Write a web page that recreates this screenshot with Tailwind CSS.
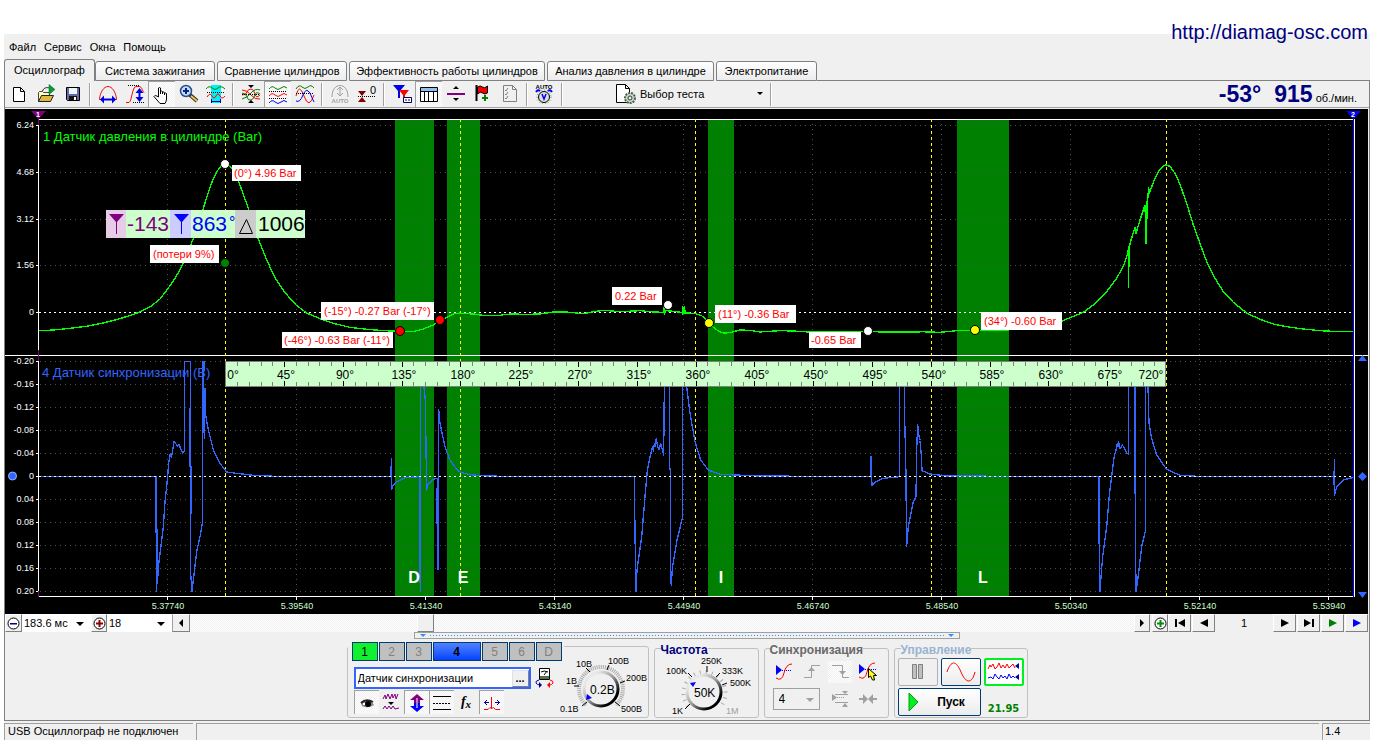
<!DOCTYPE html>
<html lang="ru">
<head>
<meta charset="utf-8">
<title>USB Осциллограф</title>
<script src="https://cdn.jsdelivr.net/npm/@tailwindcss/browser@4"></script>
</head>
<body class="relative bg-white pl-1 pr-3 pt-[34px] font-['Liberation_Sans',sans-serif] text-[11px] leading-[14px] text-black">
<a href="http://diamag-osc.com" class="absolute right-[14px] top-[20px] text-[20px] leading-[24px] text-[#000080]">http://diamag-osc.com</a>
<div class="bg-[#f0f0f0]">

<!-- Menu -->
<nav class="flex h-[25px] items-center gap-2 pl-[5px]">
<button>Файл</button><button>Сервис</button><button>Окна</button><button>Помощь</button>
</nav>

<!-- Tabs -->
<div role="tablist" class="flex h-[22px] items-end gap-[2px]">
<button role="tab" aria-selected="true" class="-mr-[2px] h-[22px] w-[91px] rounded-t-[3px] border border-b-0 border-[#808080] bg-[#f0f0f0] pb-[2px]">Осциллограф</button>
<button role="tab" class="h-[20px] w-[120px] rounded-t-[3px] border border-[#808080] bg-linear-to-b from-white to-[#ececec]">Система зажигания</button>
<button role="tab" class="h-[20px] w-[130px] rounded-t-[3px] border border-[#808080] bg-linear-to-b from-white to-[#ececec]">Сравнение цилиндров</button>
<button role="tab" class="h-[20px] w-[196px] rounded-t-[3px] border border-[#808080] bg-linear-to-b from-white to-[#ececec]">Эффективность работы цилиндров</button>
<button role="tab" class="h-[20px] w-[167px] rounded-t-[3px] border border-[#808080] bg-linear-to-b from-white to-[#ececec]">Анализ давления в цилиндре</button>
<button role="tab" class="h-[20px] w-[101px] rounded-t-[3px] border border-[#808080] bg-linear-to-b from-white to-[#ececec]">Электропитание</button>
<span class="-ml-[2px] h-px flex-1 bg-[#808080]"></span>
</div>

<div class="border-x border-b border-[#808080]">
<!-- Toolbar -->
<div class="flex h-[27px] items-center border-b border-[#a0a0a0]">
<button aria-label="Новый" class="flex h-[26px] w-[27px] items-center justify-center"><svg width="20" height="20"><path d="M4.500 3.500h7l4 4v10h-11zM11.500 3.500v4h4" fill="#fff" stroke="#000"/></svg></button>
<button aria-label="Открыть" class="flex h-[26px] w-[27px] items-center justify-center"><svg width="20" height="20"><path d="M2.500 17.500v-9l1-1h3l1 1h6v3" fill="#ffffb0" stroke="#444"/><path d="M2.500 17.500l3-6h12l-3 6z" fill="#e0b840" stroke="#222"/><path d="M6.500 7c1-3 4-4 7-3" fill="none" stroke="#222"/><path d="M13 .500l6 5-6 5z" fill="#00a030" stroke="#006020" stroke-width=".5"/></svg></button>
<button aria-label="Сохранить" class="flex h-[26px] w-[27px] items-center justify-center"><svg width="20" height="20"><path d="M3.500 3.500h13v13h-12l-1-1z" fill="#6868a8" stroke="#000"/><path d="M6 4h8v6H6z" fill="#e8f8ff"/><path d="M6 12h8v4H6z" fill="#111"/><path d="M11 13h2v3h-2z" fill="#fff"/></svg></button>
<span class="mx-[3px] h-[23px] w-[2px] border-r border-white bg-[#a0a0a0]"></span>
<button aria-label="Ширина" class="flex h-[26px] w-[27px] items-center justify-center"><svg width="20" height="20"><path d="M1.500 15.500C2 8 6 2.500 10 2.500S18 8 18.500 15.500H15M1.500 15.500H5" fill="none" stroke="#f00"/><path d="M2 15.500l4-4v3h8v-3l4 4-4 4v-3H6v3z" fill="#0000e0"/></svg></button>
<button aria-label="Высота" class="flex h-[26px] w-[27px] items-center justify-center"><svg width="20" height="20"><path d="M1 18.500h3C7 17 7 3 11 2.500h3c3 0 3 4 5 6" fill="none" stroke="#f00"/><path d="M3 1.500h11M8 18.500h11" stroke="#000" stroke-dasharray="1 1"/><path d="M14.500 4l4 5h-3v4h3l-4 5-4-5h3V9h-3z" fill="#0000e0"/></svg></button>
<button aria-label="Рука" aria-pressed="true" class="flex h-[26px] w-[27px] items-center justify-center border-l border-t border-[#a0a0a0] bg-[repeating-conic-gradient(#fff_0_25%,#f0f0f0_0_50%)] bg-[length:2px_2px]"><svg width="20" height="20"><path d="M6.500 12V3q1-1 2 0v6V6.500q1-1 2 0V9V7.500q1-1 2 0V10V8.500q1-1 2 0V14q0 2-1.500 4.500h-5Q5 15 2 11.500q1-2 4.500.500z" fill="#fff" stroke="#000"/></svg></button>
<button aria-label="Лупа" class="flex h-[26px] w-[27px] items-center justify-center"><svg width="20" height="20"><path d="M10 10l8 7" stroke="#333" stroke-width="4"/><path d="M12 12l6 5" stroke="#f0c050" stroke-width="2"/><circle cx="7" cy="7" r="5.500" fill="#c0dcff" stroke="#2a5080" stroke-width="1.500"/><path d="M7 4v6M4 7h6" stroke="#102080" stroke-width="2"/></svg></button>
<button aria-label="Фрагмент" class="flex h-[26px] w-[27px] items-center justify-center"><svg width="20" height="20"><path d="M5 1h10v18H5z" fill="#00f0f8"/><path d="M0 5q3-4 6-1t6 0 7 1" fill="none" stroke="#008000"/><path d="M1 8.500h18" stroke="#000" stroke-dasharray="1 1"/><path d="M1 13q3-5 5-1t4 0 4 0 5 0" fill="none" stroke="#f00"/><path d="M5.500 15v4M14.500 15v4M5 17.500h10" stroke="#0000a0"/></svg></button>
<span class="mx-[3px] h-[23px] w-[2px] border-r border-white bg-[#a0a0a0]"></span>
<button aria-label="Совместить" class="flex h-[26px] w-[27px] items-center justify-center"><svg width="20" height="20" fill="none"><path d="M1 11q4 0 5-3t4-3 4 5 5 1" stroke="#f00"/><path d="M1 9q4 0 5 4t4 3 4-5 5-1" stroke="#008000"/><path d="M1 15q5-1 9-6t9-3" stroke="#008000"/><path d="M1 6q5 0 9 5t9 4" stroke="#f00"/><path d="M1 10.500h18" stroke="#000" stroke-dasharray="1 1"/><path d="M7 1h6l-3 3zM7 19h6l-3-3z" fill="#000"/></svg></button>
<button aria-label="Разнести" aria-pressed="true" class="flex h-[26px] w-[27px] items-center justify-center border-l border-t border-[#a0a0a0] bg-[repeating-conic-gradient(#fff_0_25%,#f0f0f0_0_50%)] bg-[length:2px_2px]"><svg width="20" height="20" fill="none"><path d="M1 4q3-4 6-1t6 0 6 0" stroke="#008000"/><path d="M1 11q3-4 6-1t6 0 6 0" stroke="#f00"/><path d="M1 18q3-4 6-1t6 0 6 0" stroke="#0000ff"/><path d="M1 6.500h18M1 13.500h18" stroke="#000" stroke-dasharray="1 1"/></svg></button>
<button aria-label="Наложить" class="flex h-[26px] w-[27px] items-center justify-center"><svg width="20" height="20" fill="none"><path d="M1 5q3-5 6-2t6 0 6 1" stroke="#008000"/><path d="M1 12Q4-2 9 12t10-1" stroke="#f00"/><path d="M1 17q4 2 7-6t7-2q2 5 4 9" stroke="#0000ff"/><path d="M1 9.500h18" stroke="#000" stroke-dasharray="1 1"/></svg></button>
<span class="mx-[3px] h-[23px] w-[2px] border-r border-white bg-[#a0a0a0]"></span>
<button aria-label="Автомасштаб" disabled class="flex h-[26px] w-[27px] items-center justify-center"><svg width="20" height="20"><path d="M2 13C2 5 6 1.500 10 1.500S18 5 18 13M10 3v9M7 6l3-3 3 3M7 9l3 3 3-3" fill="none" stroke="#a0a0a0"/><text x="10" y="19" font-size="6" font-weight="bold" text-anchor="middle" fill="#a0a0a0">AUTO</text></svg></button>
<button aria-label="Обнулить" class="flex h-[26px] w-[27px] items-center justify-center"><svg width="20" height="20"><path d="M1 7h8l-4 5zM1 18h8l-4-5z" fill="#800000"/><path d="M1 12.500h18" stroke="#000" stroke-dasharray="1 1"/><text x="13" y="10" font-size="11">0</text></svg></button>
<span class="mx-[3px] h-[23px] w-[2px] border-r border-white bg-[#a0a0a0]"></span>
<button aria-label="Курсоры" class="flex h-[26px] w-[27px] items-center justify-center"><svg width="20" height="20"><path d="M1 1h12L8 7v7H6V7z" fill="#0000f0"/><path d="M7 6h10l-4 5v7h-2v-7z" fill="#f00"/><path d="M11.500 13.500h8v5h-8z" fill="#fff" stroke="#000060"/><path d="M13 16h2m1 0h2" stroke="#000060"/></svg></button>
<button aria-label="Таблица" aria-pressed="true" class="flex h-[26px] w-[27px] items-center justify-center border-l border-t border-[#a0a0a0] bg-[repeating-conic-gradient(#fff_0_25%,#f0f0f0_0_50%)] bg-[length:2px_2px]"><svg width="20" height="20"><path d="M1.500 2.500h17v14h-17z" fill="#fff" stroke="#000"/><path d="M2 3h16v3H2z" fill="#90c0f0"/><path d="M2 6.500h16M5.500 6v10M9.500 6v10M14.500 6v10" stroke="#000"/></svg></button>
<button aria-label="Уровень" class="flex h-[26px] w-[27px] items-center justify-center"><svg width="20" height="20"><path d="M7 5l3-3 3 3zM7 14l3 3 3-3z"/><path d="M1 9h18v2H1z" fill="#800080"/></svg></button>
<button aria-label="Метка" class="flex h-[26px] w-[27px] items-center justify-center"><svg width="20" height="20"><path d="M3.500 1v16" stroke="#000" stroke-width="2"/><path d="M4.500 3q3-2 5 0t5-1v7q-3 2-5 0t-5 1z" fill="#f00000" stroke="#000"/><path d="M12 11v6M9 14h6" stroke="#008000" stroke-width="2"/></svg></button>
<button aria-label="Отчёт" disabled class="flex h-[26px] w-[27px] items-center justify-center"><svg width="20" height="20"><path d="M3.500 1.500h9l4 4v12h-13zM12.500 1.500v4h4" fill="none" stroke="#808080"/><path d="M5 6l1 1 2-3M5 10l1 1 2-3M5 14l1 1 2-3" fill="none" stroke="#808080"/></svg></button>
<span class="mx-[3px] h-[23px] w-[2px] border-r border-white bg-[#a0a0a0]"></span>
<button aria-label="Авто диапазон" class="flex h-[26px] w-[27px] items-center justify-center"><svg width="20" height="20"><text x="9" y="5" font-size="6" font-weight="bold" text-anchor="middle">AUTO</text><circle cx="9" cy="13" r="5.500" fill="#ddd" stroke="#000"/><circle cx="9" cy="13" r="7" fill="none" stroke="#777" stroke-dasharray="1 2"/><path d="M7 10l2 5 2-5" fill="none" stroke="#00f" stroke-width="1.500"/><path d="M1 8q2-3 4-1M17 8q-2-3-4-1" fill="none" stroke="#00f" stroke-width="2"/></svg></button>
<span class="mx-[3px] h-[23px] w-[2px] border-r border-white bg-[#a0a0a0]"></span>
<button class="ml-[50px] flex h-[26px] w-[148px] items-center gap-1"><svg width="20" height="20"><path d="M.500.500h9l4 4v14H.500zM9.500.500v4h4" fill="#fff" stroke="#000"/><circle cx="14" cy="14" r="5" fill="#c8d8c8" stroke="#506050" stroke-width="2" stroke-dasharray="2 1"/><circle cx="14" cy="14" r="2" fill="#eee" stroke="#304030"/></svg><span class="flex-1 text-left">Выбор теста</span><svg width="7" height="4"><path d="M0 0h6L3 3z"/></svg></button>
<span class="ml-[6px] h-[23px] w-[2px] border-r border-white bg-[#a0a0a0]"></span>
<output class="ml-auto mr-[12px] flex items-baseline font-bold text-[#000080]"><span class="mr-[13px] text-[23px] leading-[24px]">-53°</span><span class="mr-[3px] text-[23px] leading-[24px]">915</span><span class="text-[11px] font-normal text-black">об./мин.</span></output>
</div>

<!-- Waveform chart -->
<div class="pr-px pt-px">
<svg viewBox="5 109 1363 505" class="block h-auto w-full bg-black" role="img" aria-label="Осциллограмма">
<g fill="#008000"><path d="M395 120h39v235h-39zM395 356h39v240h-39zM447 120h33v235h-33zM447 356h33v240h-33zM708 120h26v235h-26zM708 356h26v240h-26zM957 120h52v235h-52zM957 356h52v240h-52z"/></g>
<g stroke="#505050" stroke-dasharray="1 4" shape-rendering="crispEdges">
<path d="M40 125.500H1352M40 172.500H1352M40 219.500H1352M40 265.500H1352M40 361.500H1352M40 384.500H1352M40 407.500H1352M40 430.500H1352M40 453.500H1352M40 499.500H1352M40 522.500H1352M40 545.500H1352M40 568.500H1352M40 591.500H1352"/>
<path d="M167.500 124V596M296.500 124V596M425.500 124V596M554.500 124V596M683.500 124V596M812.500 124V596M941.500 124V596M1070.500 124V596M1199.500 124V596M1328.500 124V596"/>
</g>
<g stroke="#fff" shape-rendering="crispEdges" fill="none">
<path d="M38 119.500H1354M5 355.500H1368M38.500 119V597M38 596.500H1354M1354.500 119V597"/>
<path d="M36 125.500h2M36 172.500h2M36 219.500h2M36 265.500h2M36 312.500h2M36 361.500h2M36 384.500h2M36 407.500h2M36 430.500h2M36 453.500h2M36 476.500h2M36 499.500h2M36 522.500h2M36 545.500h2M36 568.500h2M36 591.500h2M167.500 597v3M296.500 597v3M425.500 597v3M554.500 597v3M683.500 597v3M812.500 597v3M941.500 597v3M1070.500 597v3M1199.500 597v3M1328.500 597v3"/>
<path d="M39 312.500H1353" stroke-dasharray="2 3"/>
<path d="M1353.500 119V597" stroke="#00f"/>
<path d="M38.500 115v10M38.500 350v11M38.500 591v6" stroke="#800080"/>
</g>
<g stroke="#ff0" stroke-dasharray="3 3" shape-rendering="crispEdges"><path d="M225.500 119V596M460.500 119V596M695.500 119V596M931.500 119V596M1166.500 119V596"/></g>

<!-- Channel titles -->
<text x="43" y="141" font-size="13" fill="#00ff00">1 Датчик давления в цилиндре (Bar)</text>
<text x="42" y="377" font-size="13" fill="#3366ff">4 Датчик синхронизации (В)</text>

<!-- Cylinder pressure trace -->
<g fill="none" stroke="#00ff00" stroke-width="4" shape-rendering="crispEdges" stroke-linejoin="round">
<path transform="translate(0 105) scale(.333333)" d="M118 677L160 675 200 671 260 664 300 656 350 644 385 633 420 621 450 606 480 582 502 553 520 528 540 495 550 472 568 430 580 400 610 310 625 262 640 220 652 198 665 180 676 176 688 183 700 195 718 235 745 310 775 402 800 465 825 518 855 563 888 600 920 624 960 641 1000 655 1050 667 1110 674 1170 678 1200 679 1240 680 1270 672 1300 660 1320 645 1340 638 1360 627 1380 624"/>
<path transform="translate(460 280) scale(.333333)" d="M0 100L40 102 75 107 110 107 150 102 200 103 240 102 280 96 320 96 370 101 400 95 430 91 480 95 540 92 580 96 610 97 612 84 614 103 616 92 630 93 665 97 668 103 668 80 672 100 673 80 676 99 705 100 725 107 747 128 760 142 775 153 790 159 810 158 840 150 870 151 900 156 960 152 1000 153 1044 156 1100 156 1224 155 1280 156 1380 156"/>
<path transform="translate(920 105) scale(.333333)" d="M0 680L60 682 110 677 165 676 250 677 330 665 380 655 426 648 490 622 520 600 560 560 590 520 610 483 622 450 626 425 625 548 628 430 630 415 645 367 648 385 660 345 675 300 678 415 679 290 681 340 683 285 686 247 688 265 700 232 715 200 728 185 738 180 750 184 765 205 780 238 800 295 820 360 838 410 860 470 885 520 910 560 940 592 980 624 1020 643 1060 657 1100 665 1150 672 1200 677 1240 679 1300 680"/>
</g>
<!-- Sync sensor trace -->
<g fill="none" stroke="#3366ff" stroke-width="4" shape-rendering="crispEdges" stroke-linejoin="round">
<path transform="translate(0 350) scale(.333333)" d="M118 380H467L467 548 469 380 470 725 472 540 473 700 474 660 480 610 490 530 495 455 502 390 506 340 510 312 514 322 518 300 522 275 527 280 532 290 537 282 542 297 548 310 553 303 553 35 571 35 570 350 573 350 572 670 576 725 580 690 590 605 600 560 607 520 608 35 612 35 610 150 613 265 615 115 617 195 625 240 640 300 660 340 680 366 710 370 760 376 850 380 1173 380 1174 325 1175 418 1177 410 1190 395 1215 383 1258 380 1258 548 1261 725 1261 110 1272 110 1276 150 1278 290 1280 420 1284 403 1300 388 1312 385 1310 520 1313 385 1314 660 1316 178 1319 215 1335 290 1350 330 1370 358 1380 366"/>
<path transform="translate(460 280) scale(.333333)" d="M0 576L30 584 80 588 200 590 523 590 525 760 528 935 531 870 545 770 555 650 562 570 570 530 574 515 578 500 580 514 583 490 585 500 589 475 593 500 597 508 602 492 606 505 611 525 613 320 613 245 629 245 629 560 632 580 631 885 634 915 637 865 650 785 667 715 667 245 676 245 680 320 690 400 705 485 722 540 745 570 780 583 900 588 1232 590 1233 530 1236 618 1245 607 1270 595 1318 590 1318 245 1332 245 1334 420 1337 520 1340 800 1345 740 1360 665 1368 650 1370 510 1373 433 1377 470 1380 480"/>
<path transform="translate(920 350) scale(.333333)" d="M0 272L4 315 6 362 30 372 80 378 537 380 537 550 540 725 543 680 548 620 560 530 568 435 576 370 582 322 588 300 592 280 594 290 596 275 600 297 607 285 614 295 620 310 626 312 626 110 645 110 645 370 648 725 652 700 665 590 677 540 677 110 684 110 687 220 695 265 710 315 740 358 780 376 850 380 1243 380 1242 405 1243 330 1244 435 1250 410 1270 390 1300 382"/>
</g>
<path d="M39 476.500H1353" stroke="#fff" stroke-dasharray="2 3" shape-rendering="crispEdges"/>

<!-- Crank angle ruler -->
<g shape-rendering="crispEdges">
<path d="M225.500 361.500h940v25h-940z" fill="#ccffcc" stroke="#808080"/>
<path d="M237 364H1165M237 384H1165" stroke="#808080" stroke-width="4" stroke-dasharray="1 10.760"/>
<path d="M284 364.500H1160M284 383.500H1160" stroke="#000" stroke-width="5" stroke-dasharray="1 57.800"/>
</g>
<g font-size="12" text-anchor="middle">
<text x="233" y="379">0°</text><text x="286" y="379">45°</text><text x="345" y="379">90°</text><text x="404" y="379">135°</text><text x="463" y="379">180°</text><text x="521" y="379">225°</text><text x="580" y="379">270°</text><text x="639" y="379">315°</text><text x="698" y="379">360°</text><text x="757" y="379">405°</text><text x="816" y="379">450°</text><text x="875" y="379">495°</text><text x="934" y="379">540°</text><text x="992" y="379">585°</text><text x="1051" y="379">630°</text><text x="1110" y="379">675°</text><text x="1151" y="379">720°</text>
</g>
<g font-size="16" font-weight="bold" fill="#fff" text-anchor="middle"><text x="414" y="583">D</text><text x="463" y="583">E</text><text x="721" y="583">I</text><text x="983" y="583">L</text></g>

<!-- Axis labels -->
<g font-size="9" fill="#fff" text-anchor="end">
<text x="34" y="128">6.24</text><text x="34" y="175">4.68</text><text x="34" y="222">3.12</text><text x="34" y="268">1.56</text><text x="34" y="315">0</text>
<text x="34" y="364">-0.20</text><text x="34" y="387">-0.16</text><text x="34" y="410">-0.12</text><text x="34" y="433">-0.08</text><text x="34" y="456">-0.04</text><text x="34" y="479">0</text><text x="34" y="502">0.04</text><text x="34" y="525">0.08</text><text x="34" y="548">0.12</text><text x="34" y="571">0.16</text><text x="34" y="594">0.20</text>
</g>
<g font-size="9" fill="#ccffcc" text-anchor="middle">
<text x="168" y="609">5.37740</text><text x="297" y="609">5.39540</text><text x="426" y="609">5.41340</text><text x="555" y="609">5.43140</text><text x="684" y="609">5.44940</text><text x="813" y="609">5.46740</text><text x="942" y="609">5.48540</text><text x="1071" y="609">5.50340</text><text x="1200" y="609">5.52140</text><text x="1329" y="609">5.53940</text>
</g>

<!-- Value tags -->
<path fill="#fff" d="M232 165h69v16h-69zM150 245h69v18h-69zM321 302h113v18h-113zM282 332h111v16h-111zM612 287h50v18h-50zM715 305h81v18h-81zM809 332h52v16h-52zM981 312h81v18h-81z"/>
<g font-size="11" fill="#f00">
<text x="234" y="177">(0°) 4.96 Bar</text><text x="153" y="258">(потери 9%)</text><text x="324" y="315">(-15°) -0.27 Bar (-17°)</text><text x="284" y="344">(-46°) -0.63 Bar (-11°)</text><text x="615" y="300">0.22 Bar</text><text x="718" y="318">(11°) -0.36 Bar</text><text x="811" y="344">-0.65 Bar</text><text x="984" y="325">(34°) -0.60 Bar</text>
</g>
<g stroke="#000"><g fill="#fff"><circle cx="225" cy="164" r="4.500"/><circle cx="668" cy="305" r="4.500"/><circle cx="868" cy="331" r="4.500"/></g><circle cx="225" cy="263" r="4.500" fill="#008000"/><g fill="#f00"><circle cx="400" cy="331" r="4.500"/><circle cx="440" cy="320" r="4.500"/></g><g fill="#ff0"><circle cx="709" cy="323" r="4.500"/><circle cx="975" cy="330" r="4.500"/></g></g>

<!-- Cursor readout -->
<path d="M106 210h199v28H106z" fill="#ccffcc"/>
<path d="M106 210h20v28h-20z" fill="#e6cce6"/><path d="M170 210h21v28h-21z" fill="#ccccff"/><path d="M235 210h21v28h-21z" fill="#cccccc"/>
<path d="M109 214h15l-7 8v12h-1v-12z" fill="#800080"/><path d="M174 214h15l-7 8v12h-1v-12z" fill="#0000ff"/><path d="M239.500 233.500l7-14 6 14z" fill="none" stroke="#000"/>
<g font-size="21"><text x="127" y="231" fill="#800080">-143</text><text x="192" y="231" fill="#0000ff">863</text><text x="229" y="228" font-size="16" fill="#0000ff">°</text><text x="258" y="231">1006</text></g>

<!-- Cursor flags and channel markers -->
<path d="M31 111h15l-7.500 8z" fill="#800080"/><path d="M1346 111h15l-7.500 8z" fill="#00f"/>
<g font-size="7" font-weight="bold" fill="#fff" text-anchor="middle"><text x="38" y="117">1</text><text x="1353" y="117">2</text></g>
<circle cx="12.500" cy="476" r="4" fill="#3366ff" stroke="#99b3ff"/>
<path d="M1358 361l4.500-6 4.500 6zM1362.500 472l4.500 4.500-4.500 4.500-4.500-4.500zM1358 592h9l-4.500 6z" fill="#3366ff"/>
</svg>
</div>

<!-- Time base and navigation -->
<div class="flex h-[18px] items-stretch pr-px">
<button aria-label="Уменьшить" class="flex w-[17px] items-center justify-center border border-[#808080] border-l-white border-t-white"><svg width="13" height="13"><circle cx="6.500" cy="6.500" r="5.500" fill="#fff" stroke="#000"/><path d="M3 6h7v1.500H3z" fill="#000080"/></svg></button>
<label class="relative flex w-[69px] items-center bg-white"><select aria-label="Развёртка" class="w-full appearance-none bg-transparent pl-[2px] outline-none"><option>183.6 мс</option></select><svg width="8" height="4" class="absolute right-[7px] top-[8px]"><path d="M0 0h8L4 4z"/></svg></label>
<button aria-label="Увеличить" class="flex w-[16px] items-center justify-center border border-[#808080] border-l-white border-t-white"><svg width="13" height="13"><circle cx="6.500" cy="6.500" r="5.500" fill="#fff" stroke="#000"/><path d="M3 5.500h7v2H3zM5.500 3h2v7h-2z" fill="#900000"/></svg></button>
<label class="relative flex w-[65px] items-center bg-white"><select aria-label="Масштаб" class="w-full appearance-none bg-transparent pl-[2px] outline-none"><option>18</option></select><svg width="8" height="4" class="absolute right-[7px] top-[8px]"><path d="M0 0h8L4 4z"/></svg></label>
<button aria-label="Влево" class="flex w-[18px] items-center justify-center border border-[#808080] border-l-[#a0a0a0] border-t-white"><svg width="5" height="8"><path d="M4 0v8L0 4z"/></svg></button>
<div class="flex flex-1 bg-[repeating-conic-gradient(#fff_0_25%,#f0f0f0_0_50%)] bg-[length:2px_2px]"><span class="w-[24%]"></span><button aria-label="Ползунок" class="w-[17px] border border-b-[#808080] border-l-white border-r-[#808080] border-t-white bg-[#f0f0f0]"></button></div>
<button aria-label="Вправо" class="flex w-[16px] items-center justify-center border border-[#808080] border-l-white border-t-white"><svg width="5" height="8"><path d="M0 0v8l4-4z"/></svg></button>
<button aria-label="Добавить" class="ml-[2px] flex w-[16px] items-center justify-center border border-[#808080] border-l-white border-t-white"><svg width="13" height="13"><circle cx="6.500" cy="6.500" r="5.500" fill="#fff" stroke="#000"/><path d="M3 5.500h7v2H3zM5.500 3h2v7h-2z" fill="#009000"/></svg></button>
<button aria-label="В начало" class="flex w-[23px] items-center justify-center border border-[#808080] border-l-white border-t-white"><svg width="10" height="8"><path d="M0 0h2v8H0zM10 0v8L3 4z"/></svg></button>
<button aria-label="Назад" class="ml-px flex w-[23px] items-center justify-center border border-[#808080] border-l-white border-t-white"><svg width="8" height="8"><path d="M8 0v8L0 4z"/></svg></button>
<span class="flex w-[58px] items-center justify-center">1</span>
<button aria-label="Вперёд" class="flex w-[23px] items-center justify-center border border-[#808080] border-l-white border-t-white"><svg width="8" height="8"><path d="M0 0v8l8-4z"/></svg></button>
<button aria-label="В конец" class="ml-px flex w-[23px] items-center justify-center border border-[#808080] border-l-white border-t-white"><svg width="10" height="8"><path d="M8 0h2v8H8zM0 0v8l7-4z"/></svg></button>
<button aria-label="Воспроизвести" class="ml-px flex w-[23px] items-center justify-center border border-[#808080] border-l-white border-t-white"><svg width="8" height="8"><path d="M0 0v8l8-4z" fill="#008000"/></svg></button>
<button aria-label="Воспроизвести всё" class="ml-px flex w-[23px] items-center justify-center border border-[#808080] border-l-white border-t-white"><svg width="8" height="8"><path d="M0 0v8l8-4z" fill="#00f"/></svg></button>
</div>

<!-- Splitter -->
<div class="mx-auto flex h-[7px] w-[546px] items-center gap-1 border border-[#a0a0a0] px-[5px]">
<svg width="6" height="3"><path d="M0 0h6L3 3z" fill="#3090ff"/></svg><span class="h-px flex-1 bg-[repeating-linear-gradient(90deg,#3090ff_0_1px,transparent_1px_3px)]"></span><svg width="6" height="3"><path d="M0 0h6L3 3z" fill="#3090ff"/></svg>
</div>

<!-- Control groups -->
<div class="flex h-[81px] items-end justify-center gap-[5px] pb-[2px]">

<section aria-label="Каналы" class="flex h-[72px] w-[302px] rounded-[3px] border border-[#c0c0c0]">
<div class="-mt-[5px] w-[216px]">
<div class="flex h-[19px] gap-px bg-[#f0f0f0] pl-[4px] text-[12px] text-[#808080]">
<button class="w-[26px] border border-[#003c74] bg-[#10f030] text-black">1</button><button class="w-[26px] border border-[#003c74] bg-[#c0c0c0]">2</button><button class="w-[26px] border border-[#003c74] bg-[#c0c0c0]">3</button><button class="w-[48px] border border-[#003c74] bg-linear-to-b from-[#5080ff] to-[#0040ff] font-bold text-black">4</button><button class="w-[26px] border border-[#003c74] bg-[#c0c0c0]">5</button><button class="w-[26px] border border-[#003c74] bg-[#c0c0c0]">6</button><button class="w-[26px] border border-[#003c74] bg-[#c0c0c0]">D</button>
</div>
<div class="mt-[6px] flex items-center gap-1 pl-[6px]">
<div class="flex h-[22px] w-[177px] items-center border-2 border-[#3366ff] bg-white pl-[2px]"><input aria-label="Датчик канала" value="Датчик синхронизации" class="min-w-0 flex-1 outline-none"><button class="flex h-[17px] w-[17px] items-center justify-center border border-[#808080] border-l-[#e0e0e0] border-t-[#e0e0e0] bg-[#f0f0f0] font-bold">...</button></div>
<button aria-label="Прибор"><svg width="20" height="20"><path d="M4.500.500h10v11h-10z" fill="#fff" stroke="#000"/><path d="M5 8h9v3H5z" fill="#507050"/><path d="M6 4q3-2 7 0M9 7l3-4" fill="none" stroke="#000"/><path d="M4 12q-4 1-3 3t4 2" fill="none" stroke="#0000a0"/><path d="M4 14l3 3-3 3z" fill="#0000a0"/><path d="M15 12q4 1 3 3t-4 2" fill="none" stroke="#f00"/><path d="M15 14l-3 3 3 3z" fill="#f00"/></svg></button>
</div>
<div class="mt-px flex pl-[6px]">
<button aria-label="Показать" class="flex h-[24px] w-[25px] items-center justify-center border-l border-t border-[#a0a0a0] bg-[repeating-conic-gradient(#fff_0_25%,#f0f0f0_0_50%)] bg-[length:2px_2px]"><svg width="16" height="14"><path d="M2 7q5-5 11-1l2 3q-6 4-12 1z" fill="#888"/><path d="M2 7q5-5 12-1" fill="none" stroke="#222" stroke-width="2"/><circle cx="9" cy="8" r="3" fill="#000"/><path d="M4 8h2" stroke="#fff" stroke-width="2"/></svg></button>
<button aria-label="Фильтр" class="flex h-[24px] w-[25px] items-center justify-center"><svg width="18" height="18"><path d="M1 6l2-4 1 4 2-5 2 5 2-5 1 4 2-4 1 5 2-5" fill="none" stroke="#800080"/><path d="M6 9h6l-3 3z"/><path d="M1 16l2-3 2 3 2-3 2 3 2-3 2 3 4-1" fill="none" stroke="#800080"/></svg></button>
<button aria-label="Сдвиг" class="flex h-[24px] w-[25px] items-center justify-center border-l border-t border-[#a0a0a0] bg-[repeating-conic-gradient(#fff_0_25%,#f0f0f0_0_50%)] bg-[length:2px_2px]"><svg width="18" height="20"><path d="M9 1l7 6h-4v3H6V7H2z" fill="#800080"/><path d="M9 19l7-6h-4v-3H6v3H2z" fill="#00f"/><path d="M9 5v10" stroke="#fff"/></svg></button>
<button aria-label="Линии" class="flex h-[24px] w-[25px] items-center justify-center border-l border-t border-[#a0a0a0] bg-[repeating-conic-gradient(#fff_0_25%,#f0f0f0_0_50%)] bg-[length:2px_2px]"><svg width="18" height="16"><path d="M0 1.500h18M0 14.500h18" stroke="#000"/><path d="M0 8.500h18" stroke="#000" stroke-dasharray="2 1"/></svg></button>
<button aria-label="Функция" class="flex h-[24px] w-[25px] items-center justify-center font-['Liberation_Serif',serif] text-[14px] font-bold italic"><span>f</span><span class="pt-1 text-[11px]">x</span></button>
<button aria-label="Импульс" class="flex h-[24px] w-[25px] items-center justify-center border-l border-t border-[#a0a0a0] bg-[repeating-conic-gradient(#fff_0_25%,#f0f0f0_0_50%)] bg-[length:2px_2px]"><svg width="18" height="16"><path d="M1 14.500h4l2-2 1.500 1V2v11.500l2-1 2 2h4.500" fill="none" stroke="#f00"/><path d="M1 7.500h5M4 5L1.500 7.500 4 10M17 7.500h-5M14 5l2.500 2.500L14 10" fill="none" stroke="#0000a0"/></svg></button>
</div>
</div>
<svg width="84" height="68" viewBox="564 649 84 68" class="overflow-visible" role="img" aria-label="Диапазон напряжения">
<defs><linearGradient id="knob" x1="0" y1="0" x2="1" y2="1"><stop offset=".2" stop-color="#e8e8e8"/><stop offset=".5" stop-color="#999"/><stop offset=".8" stop-color="#000"/></linearGradient></defs>
<path d="M586 707a22 22 0 1 1 30 0" fill="none" stroke="#aaa" stroke-width="4" stroke-dasharray="1 1"/>
<path d="M587 704l-5 4M579 688h-5M590 674l-4-4M607 672l2-5M620 685l5-2M615 704l5 4" stroke="#000"/>
<circle cx="601" cy="691" r="17" fill="#f0f0f0" stroke="url(#knob)" stroke-width="3"/><path d="M586 702l1-6 5 4z" fill="#00f"/>
<g font-size="9"><text x="590" y="696" font-size="12">0.2В</text><text x="576" y="669">10В</text><text x="608" y="666">100В</text><text x="566" y="686">1В</text><text x="626" y="683">200В</text><text x="560" y="714">0.1В</text><text x="621" y="714">500В</text></g></svg>
</section>

<fieldset class="h-[79px] w-[105px] rounded-[3px] border border-[#c0c0c0]">
<legend class="ml-[6px] pt-[4px] text-[12px] font-bold leading-[14px] text-[#000080]">Частота</legend>
<svg width="103" height="58" viewBox="655 657 103 58" class="overflow-visible" role="img" aria-label="Частота дискретизации">
<path d="M688 706a21 21 0 1 1 33 0" fill="none" stroke="#aaa" stroke-width="4" stroke-dasharray="1 5"/>
<path d="M690 704l-5 5M692 677l-4-4M707 672v-6M716 677l4-4M722 685l5-2" stroke="#000"/>
<circle cx="704" cy="692" r="17" fill="#f0f0f0" stroke="url(#knob)" stroke-width="3"/><path d="M690 683l6-1-3 5z" fill="#00f"/>
<g font-size="9"><text x="694" y="697" font-size="12">50K</text><text x="701" y="664">250K</text><text x="666" y="674">100K</text><text x="722" y="674">333K</text><text x="730" y="686">500K</text><text x="672" y="714">1K</text><text x="726" y="714" fill="#a0a0a0">1M</text></g></svg>
</fieldset>

<fieldset class="h-[79px] w-[125px] rounded-[3px] border border-[#c0c0c0]">
<legend class="ml-[5px] pt-[4px] text-[12px] font-bold leading-[14px] text-[#696969]">Синхронизация</legend>
<div class="grid grid-cols-4 items-center justify-items-center gap-y-[4px] px-[5px] pt-[3px]">
<button aria-label="Авто" class="h-[24px]"><svg width="18" height="18"><path d="M1 2v10l6-5z" fill="#00f"/><path d="M7 7.500h10" stroke="#00f" stroke-dasharray="1 1"/><path d="M1 15q6 4 8-5t8-9" fill="none" stroke="#f00"/></svg></button>
<button aria-label="Фронт" disabled class="h-[24px]"><svg width="18" height="18"><path d="M1 14.500h7.500v-12h8.500" fill="none" stroke="#a0a0a0"/><path d="M5 8l3.500-4L12 8z" fill="#a0a0a0"/></svg></button>
<button aria-label="Спад" disabled class="flex h-[22px] w-[24px] items-center justify-center bg-[repeating-conic-gradient(#fff_0_25%,#f0f0f0_0_50%)] bg-[length:2px_2px]"><svg width="18" height="18"><path d="M1 2.500h10.500v12H18" fill="none" stroke="#a0a0a0"/><path d="M8 8l3.500 4L15 8z" fill="#a0a0a0"/></svg></button>
<button aria-label="Уровень курсором" class="h-[24px]"><svg width="20" height="20"><path d="M1 2v10l6-5z" fill="#00f"/><path d="M7 7.500h11" stroke="#00f" stroke-dasharray="1 1"/><path d="M1 15q6 4 8-5t8-9" fill="none" stroke="#f00"/><path d="M10.500 6.500v9l2-1.500 2 4h2l-1-4.500h3z" fill="#ff0" stroke="#000"/></svg></button>
<label class="relative col-span-2 w-full pl-[3px]"><select aria-label="Канал синхронизации" class="h-[22px] w-[47px] appearance-none border border-[#a0a0a0] bg-[#f0f0f0] pl-[5px] text-[12px]"><option>4</option></select><svg width="8" height="5" class="absolute left-[36px] top-[10px]"><path d="M0 0h8L4 4z" fill="#a0a0a0"/></svg></label>
<button aria-label="Уровни" disabled><svg width="18" height="18"><path d="M1 4v7l5-3.500z" fill="#a0a0a0"/><path d="M6 7.500h8" stroke="#a0a0a0" stroke-dasharray="1 1"/><path d="M4 4.500h13M4 12.500h13" stroke="#a0a0a0"/><path d="M11 1h6l-3 3zM11 17h6l-3-4z" fill="#a0a0a0"/></svg></button>
<button aria-label="Центр" disabled><svg width="18" height="12"><path d="M0 5h4V1l5 5-5 5V7H0zM18 5h-4V1L9 6l5 5V7h4z" fill="#a0a0a0"/></svg></button>
</div>
</fieldset>

<fieldset class="h-[79px] w-[134px] rounded-[3px] border border-[#c0c0c0] pl-[3px]">
<legend class="ml-[3px] pt-[4px] text-[12px] font-bold leading-[14px] text-[#99b4d1]">Управление</legend>
<div class="grid grid-cols-[40px_40px_40px] gap-x-[3px] gap-y-[2px] pt-px">
<button aria-label="Пауза" disabled class="flex h-[28px] items-center justify-center rounded-[2px] border border-[#b0b0b0]"><svg width="12" height="16"><path d="M.500.500h4v14h-4zM6.500.500h4v14h-4z" fill="#c0c0c0" stroke="#808080"/></svg></button>
<button aria-label="Синус" class="flex h-[28px] items-center justify-center rounded-[2px] border border-[#003c74] bg-linear-to-b from-white to-[#ececec]"><svg width="30" height="20"><path d="M1 10C5-2 10-2 15 10s11 12 14 0" fill="none" stroke="#f00"/></svg></button>
<button aria-label="Непрерывно" class="flex h-[28px] items-center justify-center rounded-[2px] border-2 border-[#00f020] bg-white"><svg width="34" height="22" fill="none"><path d="M1 8l2-4 1 2 2-3 2 5 2-2 2-4 2 5 2-3 2 3 2-4 2 4 2-2 2-2 2 4" stroke="#f00"/><path d="M1 17l3-1 2 2 2-5 2 3 2 2 2-4 2 3 2-2 2 3 2-5 2 4 2-2 2 2" stroke="#00f"/><path d="M32 2v6l-4-3zM32 13v6l-4-3z" fill="#0000a0"/></svg></button>
<button class="col-span-2 flex h-[28px] items-center rounded-[2px] border border-[#003c74] bg-linear-to-b from-white to-[#ececec] pl-[9px] text-[12px] font-bold"><svg width="11" height="20"><path d="M1 1v18l9-9z" fill="#00f020" stroke="#00a010"/></svg><span class="flex-1 pl-1">Пуск</span></button>
<output class="self-end text-center font-['DejaVu_Sans_Condensed','DejaVu_Sans',sans-serif] text-[11px] font-bold text-[#008000]">21.95</output>
</div>
</fieldset>
</div>
</div>

<!-- Status bar -->
<footer class="mt-[2px] flex h-[17px] gap-[3px]">
<span class="w-[189px] border-l border-t border-[#a0a0a0] pl-[3px]">USB Осциллограф не подключен</span><span class="flex-1 border-l border-t border-[#a0a0a0]"></span><span class="w-[48px] border-l border-t border-[#a0a0a0] pl-[2px]">1.4</span>
</footer>
</div>
</body>
</html>
